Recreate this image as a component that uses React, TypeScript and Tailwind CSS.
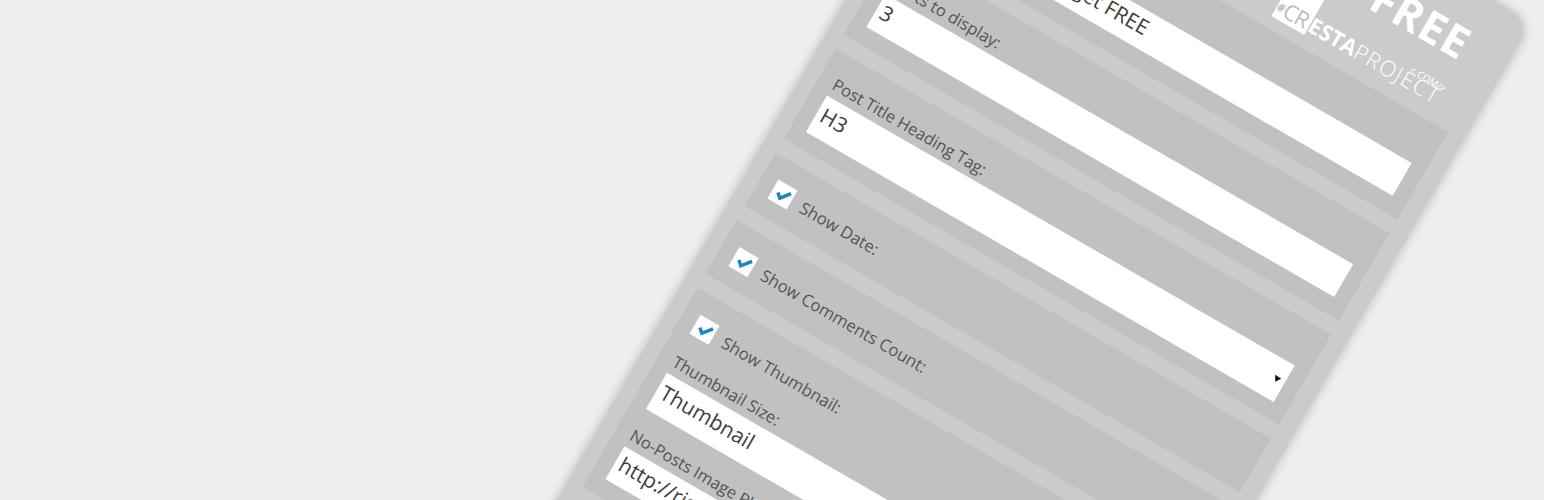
const font = { fontFamily: '"Open Sans", sans-serif' };

function Field({ label, value, select = false }: { label: string; value: string; select?: boolean }) {
  return (
    <>
      <div className="h-[29px] text-[16.5px] leading-[29px] text-[#555555] whitespace-nowrap">{label}</div>
      <div
        className={`relative w-full overflow-hidden whitespace-nowrap bg-white pl-[5px] text-[21px] text-[#3d3d3d] ${
          select ? 'h-[42px] leading-[37px]' : 'h-[38px] leading-[33px]'
        }`}
      >
        {value}
        {select && value === 'H3' && (
          <svg className="absolute right-[3px] top-[15px] h-[10px] w-[10px]" viewBox="0 0 10 10">
            <polygon points="0.8,2.8 4.3,8.85 8,3.25" fill="#111111" />
          </svg>
        )}
      </div>
    </>
  );
}

function Check({ label }: { label: string }) {
  return (
    <div className="flex h-[22px] items-center gap-[11px]">
      <div className="h-[22px] w-[22px] shrink-0 bg-white">
        <svg viewBox="0 0 22 22" className="h-[22px] w-[22px]">
          <polyline points="6,11.5 10.5,15.5 18,6" fill="none" stroke="#1a87c4" strokeWidth="3.5" />
        </svg>
      </div>
      <span className="pt-[2px] text-[16.8px] text-[#555555] whitespace-nowrap">{label}</span>
    </div>
  );
}

function Logo() {
  return (
    <div className="relative mr-[-3px] mt-[-11px] flex h-[60px] items-end text-[22px] leading-[22px] text-white">
      <div className="flex h-[60px] w-[38px] items-end bg-white pb-[3px] pl-[1px] text-[#bdbdbd]">
        <span className="text-[12px] font-bold leading-[18px]">#</span>
        <span className="tracking-[-1px]">CR</span>
      </div>
      <span className="pb-[3px] font-bold">ESTA</span>
      <span className="pb-[3px] font-light tracking-[1.5px]">PROJECT</span>
      <span className="absolute bottom-[18px] right-[-2px] text-[10px] leading-[12px]">&lt;.COM/&gt;</span>
    </div>
  );
}

export default function App() {
  const panel = 'bg-[#c1c1c1] px-[16px]';

  return (
    <div className="relative h-[500px] w-[1544px] overflow-hidden bg-[#eeeeee]" style={font}>
      <div className="absolute left-[1007.6px] top-[-278.5px] flex w-[602px] origin-top-left rotate-[30deg] flex-col gap-[16px] rounded-[20px] bg-[#cbcbcb] pb-[70px] pl-[14px] pr-[16px] shadow-[0_0_12px_rgba(0,0,0,0.32)]">
        <header className="flex h-[119px] flex-col items-end pr-[28px] text-white">
          <div className="mr-[-2px] mt-[29px] h-[45px] text-[44px] font-bold leading-[45px] tracking-[1px]">FREE</div>
          <Logo />
        </header>

        <section className={`${panel} pb-[18px] pt-[16px]`}>
          <Field label="Title:" value="Great Posts Widget FREE" />
        </section>
        <section className={`${panel} pb-[18px] pt-[16px]`}>
          <Field label="Posts to display:" value="3" />
        </section>
        <section className={`${panel} pb-[17px] pt-[16px]`}>
          <Field label="Post Title Heading Tag:" value="H3" select />
        </section>
        <section className={`${panel} pb-[18px] pt-[22px]`}>
          <Check label="Show Date:" />
        </section>
        <section className={`${panel} pb-[18px] pt-[22px]`}>
          <Check label="Show Comments Count:" />
        </section>
        <section className={`${panel} pb-[18px] pt-[22px]`}>
          <Check label="Show Thumbnail:" />
          <div className="mt-[16px]">
            <Field label="Thumbnail Size:" value="Thumbnail" select />
          </div>
          <div className="mt-[14px]">
            <Field label="No-Posts Image Placeholder:" value="http://right.com/image.png" />
          </div>
        </section>
      </div>
    </div>
  );
}
